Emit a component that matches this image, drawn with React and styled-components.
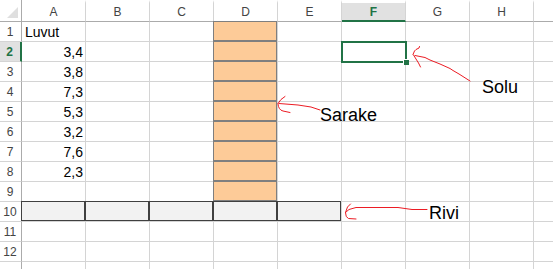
import React from 'react'
import styled, { createGlobalStyle } from 'styled-components'

const GREEN = '#217346'
const GRID = '#d4d4d4'

// the last column and row only peek in at the edges, so they stay unlabelled
const columns = ['A', 'B', 'C', 'D', 'E', 'F', 'G', 'H', 'I']
const rowCount = 13
const values = { 2: '3,4', 3: '3,8', 4: '7,3', 5: '5,3', 6: '3,2', 7: '7,6', 8: '2,3' }

const frames = {
    column: { fill: '#fdcb98', line: '#7f7f7f' },
    row: { fill: '#f2f2f2', line: '#404040' },
}

const frameFor = (col, row) => {
    if (col === 'D' && row <= 9) return 'column'
    if (row === 10 && 'ABCDE'.includes(col)) return 'row'
    return null
}

const cellText = (col, row) => {
    if (col !== 'A') return ''
    if (row === 1) return 'Luvut'
    return values[row] || ''
}

const App = () => {
    const rows = Array.from({ length: rowCount }, (_, i) => i + 1)

    return (
        <>
            <GlobalStyle />
            <Sheet>
                <Corner />
                {columns.map(col => (
                    <ColHead key={col} $selected={col === 'F'}>
                        {col === 'I' ? '' : col}
                    </ColHead>
                ))}
                {rows.map(row => (
                    <React.Fragment key={row}>
                        <RowHead $selected={row === 2}>{row < rowCount ? row : ''}</RowHead>
                        {columns.map(col => (
                            <Cell
                                key={col}
                                $frame={frameFor(col, row)}
                                $right={col === 'A' && row > 1}
                            >
                                {cellText(col, row)}
                                {col === 'F' && row === 2 && (
                                    <Selection>
                                        <Handle />
                                    </Selection>
                                )}
                            </Cell>
                        ))}
                    </React.Fragment>
                ))}

                <Arrows viewBox="0 0 553 269">
                    {/* Solu */}
                    <path d="M470 81 L459 74 L453 70.5 L450 68.5 L440 64 L430 60 L425 57.5 L415 55.5" />
                    <path d="M413 54.5 L414.5 51 L416 49.5 L419 48 L419.5 46.5" />
                    <path d="M413.5 55 L416 59 L418.5 63 L420.5 67" />
                    {/* Sarake */}
                    <path d="M320 110 L311 107 L298 105 L279 103.5" />
                    <path d="M278 103.5 L281 99.5 L285 96.5" />
                    <path d="M278 104 Q278.5 110 283 111 L290 112.5" />
                    {/* Rivi */}
                    <path d="M427 209.5 L412 209.5 L398 207.5 L356 207.5 L349 209.5 L345.5 212.5" />
                    <path d="M345.5 212.5 L347.5 207 L350.5 204" />
                    <path d="M345.5 213 Q345.5 217.5 348.5 218.5 L356 219" />
                </Arrows>

                <Note $x={482} $y={78}>Solu</Note>
                <Note $x={320} $y={106}>Sarake</Note>
                <Note $x={429} $y={204}>Rivi</Note>
            </Sheet>
        </>
    )
}

export default App

const GlobalStyle = createGlobalStyle`
    html, body {
        margin: 0;
        padding: 0;
        background: #ffffff;
    }
`

const Sheet = styled.div`
    position: relative;
    display: grid;
    grid-template-columns: 22px repeat(9, 64px);
    grid-template-rows: 22px repeat(13, 20px);
    width: 553px;
    height: 269px;
    overflow: hidden;
    background: #ffffff;
    font-family: "Liberation Sans", Arial, sans-serif;
    color: #000000;
`

const Corner = styled.div`
    position: relative;
    box-sizing: border-box;
    border-right: 1px solid #ababab;
    border-bottom: 1px solid #ababab;

    &::after {
        content: '';
        position: absolute;
        right: 3px;
        bottom: 3px;
        width: 11px;
        height: 11px;
        background: #dfdfdf;
        clip-path: polygon(100% 0, 100% 100%, 0 100%);
    }
`

const ColHead = styled.div`
    box-sizing: border-box;
    display: flex;
    align-items: center;
    justify-content: center;
    border-top: 3px solid #ffffff;
    border-right: 1px solid ${GRID};
    border-bottom: ${({ $selected }) => ($selected ? `2px solid ${GREEN}` : '1px solid #ababab')};
    background: ${({ $selected }) => ($selected ? '#e1e1e1' : '#ffffff')};
    color: ${({ $selected }) => ($selected ? GREEN : '#444444')};
    font-weight: ${({ $selected }) => ($selected ? 700 : 400)};
    font-size: 12px;
`

const RowHead = styled.div`
    box-sizing: border-box;
    display: flex;
    align-items: center;
    justify-content: center;
    padding-right: 1px;
    border-right: ${({ $selected }) => ($selected ? `2px solid ${GREEN}` : '1px solid #ababab')};
    border-bottom: 1px solid ${GRID};
    background: ${({ $selected }) => ($selected ? '#e1e1e1' : '#ffffff')};
    color: ${({ $selected }) => ($selected ? GREEN : '#444444')};
    font-weight: ${({ $selected }) => ($selected ? 700 : 400)};
    font-size: 12px;
`

const Cell = styled.div`
    position: relative;
    box-sizing: border-box;
    padding: 2px 2px 0 3px;
    border-right: 1px solid ${GRID};
    border-bottom: 1px solid ${GRID};
    background: ${({ $frame }) => ($frame ? frames[$frame].fill : '#ffffff')};
    text-align: ${({ $right }) => ($right ? 'right' : 'left')};
    font-size: 14px;
    line-height: 17px;
    white-space: nowrap;

    &::after {
        content: '';
        display: ${({ $frame }) => ($frame ? 'block' : 'none')};
        position: absolute;
        top: -1px;
        left: -1px;
        right: 0;
        bottom: 0;
        border: 1px solid ${({ $frame }) => ($frame ? frames[$frame].line : 'transparent')};
        pointer-events: none;
    }
`

const Selection = styled.div`
    position: absolute;
    top: -1px;
    left: -1px;
    right: -2px;
    bottom: -2px;
    border: 2px solid ${GREEN};
    z-index: 2;
`

const Handle = styled.div`
    position: absolute;
    right: -4px;
    bottom: -4px;
    width: 5px;
    height: 5px;
    background: ${GREEN};
    border: 1px solid #ffffff;
    border-right: none;
    border-bottom: none;
`

const Arrows = styled.svg`
    position: absolute;
    top: 0;
    left: 0;
    width: 553px;
    height: 269px;
    pointer-events: none;
    z-index: 3;

    path {
        fill: none;
        stroke: #ec1c24;
        stroke-width: 1;
        stroke-linejoin: round;
        stroke-linecap: round;
    }
`

const Note = styled.span`
    position: absolute;
    left: ${({ $x }) => $x}px;
    top: ${({ $y }) => $y}px;
    font-family: "Liberation Sans", Arial, sans-serif;
    font-size: 18px;
    line-height: 18px;
    color: #000000;
    z-index: 3;
`
